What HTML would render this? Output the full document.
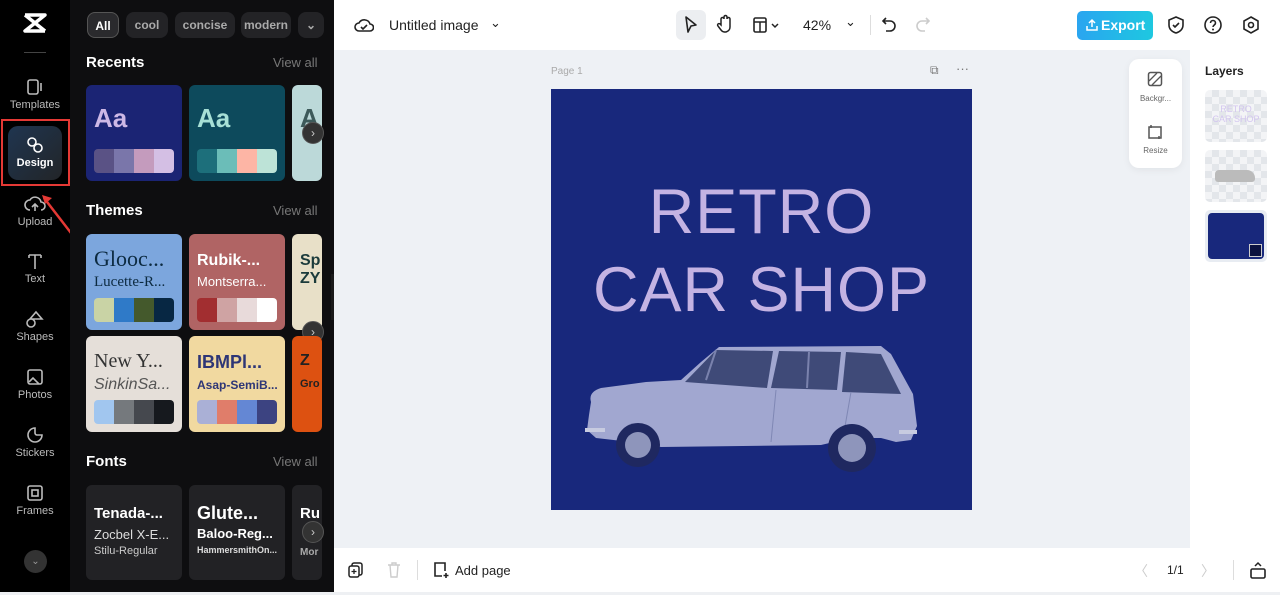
<!DOCTYPE html>
<html><head><meta charset="utf-8"><style>
*{box-sizing:border-box;margin:0;padding:0}
body{width:1280px;height:595px;overflow:hidden;font-family:"Liberation Sans",sans-serif;background:#fff;position:relative}
.abs{position:absolute}
.rail{left:0;top:0;width:70px;height:595px;background:#000}
.rail .it{position:absolute;left:0;width:70px;text-align:center;color:#bbb;font-size:11px}
.rail svg{display:block;margin:0 auto 3px}
.panel{left:70px;top:0;width:264px;height:595px;background:#0e0e10;overflow:hidden}
.chip{position:absolute;top:12px;height:26px;border-radius:8px;background:#232326;color:#aaa;font-size:12px;font-weight:bold;line-height:26px;text-align:center;overflow:hidden}
.h{position:absolute;left:16px;color:#fff;font-weight:bold;font-size:15px}
.va{position:absolute;left:203px;color:#777;font-size:13px}
.card{position:absolute;width:96px;height:96px;border-radius:6px;overflow:hidden}
.pal{position:absolute;left:8px;bottom:8px;width:80px;height:24px;border-radius:4px;overflow:hidden;display:flex}
.pal i{flex:1}
.next{position:absolute;left:232px;width:22px;height:22px;border-radius:50%;background:#333;border:1px solid #555;color:#ccc;font-size:12px;line-height:20px;text-align:center}
.ct{position:absolute;left:8px;font-weight:bold;white-space:nowrap}
.sf{font-family:"Liberation Serif",serif;font-weight:normal}
</style></head><body>
<div class="abs rail">
 <svg class="abs" style="left:22px;top:12px" width="26" height="22" viewBox="0 0 26 22"><path d="M3 3h20L3 19h20M3 3l20 16" stroke="#fff" stroke-width="3.5" fill="none" stroke-linejoin="round"/></svg>
 <div class="abs" style="left:24px;top:52px;width:22px;height:1px;background:#444"></div>
 <div class="it" style="top:78px"><svg width="20" height="18"><rect x="3" y="2" width="10" height="14" rx="2" fill="none" stroke="#bbb" stroke-width="1.6"/><path d="M16 5v8" stroke="#bbb" stroke-width="1.6"/></svg>Templates</div>
 <div class="abs" style="left:1px;top:119px;width:69px;height:67px;border:2px solid #e53935"></div>
 <div class="abs" style="left:8px;top:126px;width:54px;height:54px;border-radius:10px;background:linear-gradient(135deg,#1f3550,#222528)"></div>
 <div class="it" style="top:136px;color:#fff;font-weight:bold"><svg width="20" height="18"><circle cx="7" cy="6" r="4" fill="none" stroke="#fff" stroke-width="1.6"/><circle cx="13" cy="12" r="4" fill="none" stroke="#fff" stroke-width="1.6"/></svg>Design</div>
 <svg class="abs" style="left:38px;top:190px" width="36" height="46"><path d="M33 43L6 8" stroke="#e53935" stroke-width="2.5"/><path d="M4 5l10 3-7 6z" fill="#e53935"/></svg>
 <div class="it" style="top:195px"><svg width="22" height="18"><path d="M6 15a5 5 0 010-10 6 6 0 0111 2 4 4 0 010 8M11 16V9m-3 3l3-3 3 3" fill="none" stroke="#bbb" stroke-width="1.6"/></svg>Upload</div>
 <div class="it" style="top:252px"><svg width="20" height="18"><path d="M4 3h12M10 3v14M4 3v3M16 3v3" stroke="#bbb" stroke-width="1.6" fill="none"/></svg>Text</div>
 <div class="it" style="top:310px"><svg width="20" height="18"><path d="M11 2l6 7h-12z M6 9a4 4 0 100 8 4 4 0 000-8" fill="none" stroke="#bbb" stroke-width="1.6"/></svg>Shapes</div>
 <div class="it" style="top:368px"><svg width="20" height="18"><rect x="3" y="2" width="14" height="14" rx="2" fill="none" stroke="#bbb" stroke-width="1.6"/><path d="M4 14l4-4 6 6" stroke="#bbb" stroke-width="1.6" fill="none"/></svg>Photos</div>
 <div class="it" style="top:426px"><svg width="20" height="18"><path d="M10 2a7 7 0 107 7h-5a2 2 0 01-2-2z" fill="none" stroke="#bbb" stroke-width="1.6"/></svg>Stickers</div>
 <div class="it" style="top:484px"><svg width="20" height="18"><rect x="3" y="2" width="14" height="14" rx="2" fill="none" stroke="#bbb" stroke-width="1.6"/><rect x="7" y="6" width="6" height="6" fill="none" stroke="#bbb" stroke-width="1.6"/></svg>Frames</div>
 <div class="abs" style="left:24px;top:550px;width:23px;height:23px;border-radius:50%;background:#333;color:#999;font-size:10px;text-align:center;line-height:23px">⌄</div>
</div>
<div class="abs panel">
 <div class="chip" style="left:17px;width:32px;background:#2a2a2d;border:1px solid #555;color:#fff">All</div>
 <div class="chip" style="left:56px;width:42px">cool</div>
 <div class="chip" style="left:105px;width:60px">concise</div>
 <div class="chip" style="left:171px;width:50px">modern</div>
 <div class="chip" style="left:228px;width:26px">⌄</div>
 <div class="h" style="top:54px">Recents</div><div class="va" style="top:55px">View all</div>
 <div class="card" style="left:16px;top:85px;background:#1b2474"><div class="ct" style="top:18px;font-size:26px;color:#cdb8e6">Aa</div><div class="pal"><i style="background:#5a5285"></i><i style="background:#7a76aa"></i><i style="background:#c49bbd"></i><i style="background:#d4bfe4"></i></div></div>
 <div class="card" style="left:119px;top:85px;background:#0d4a5c"><div class="ct" style="top:18px;font-size:26px;color:#a7e0d6">Aa</div><div class="pal"><i style="background:#1d6f7b"></i><i style="background:#6bbdb8"></i><i style="background:#fdb5a5"></i><i style="background:#bde3d7"></i></div></div>
 <div class="card" style="left:222px;top:85px;width:30px;background:#bcd9d9"><div class="ct" style="top:18px;font-size:26px;color:#3d5a5a">A</div></div>
 <div class="next" style="top:122px">›</div>
 <div class="h" style="top:202px">Themes</div><div class="va" style="top:203px">View all</div>
 <div class="card" style="left:16px;top:234px;background:#7ca6dd"><div class="ct sf" style="top:12px;font-size:22px;color:#0c2a40">Glooc...</div><div class="ct sf" style="top:40px;font-size:15px;color:#0c2a40">Lucette-R...</div><div class="pal"><i style="background:#c9d3a5"></i><i style="background:#2f7ac8"></i><i style="background:#44592c"></i><i style="background:#072743"></i></div></div>
 <div class="card" style="left:119px;top:234px;background:#b06464"><div class="ct" style="top:18px;font-size:16px;color:#fff">Rubik-...</div><div class="ct" style="top:40px;font-size:13px;color:#fff;font-weight:normal">Montserra...</div><div class="pal"><i style="background:#a22e30"></i><i style="background:#cfa3a3"></i><i style="background:#e8dada"></i><i style="background:#fff"></i></div></div>
 <div class="card" style="left:222px;top:234px;width:30px;background:#e8e0c8"><div class="ct" style="top:18px;font-size:16px;color:#1b3b3b">Sp<br>ZY</div></div>
 <div class="next" style="top:321px">›</div>
 <div class="card" style="left:16px;top:336px;background:#e5dfd9"><div class="ct sf" style="top:14px;font-size:20px;color:#333">New Y...</div><div class="ct" style="top:40px;font-size:16px;color:#555;font-style:italic;font-weight:normal">SinkinSa...</div><div class="pal"><i style="background:#a1c6ef"></i><i style="background:#75797d"></i><i style="background:#45484e"></i><i style="background:#16191e"></i></div></div>
 <div class="card" style="left:119px;top:336px;background:#f1d9a0"><div class="ct" style="top:16px;font-size:18px;color:#2e3676">IBMPl...</div><div class="ct" style="top:42px;font-size:12px;color:#2e3676">Asap-SemiB...</div><div class="pal"><i style="background:#aab0d6"></i><i style="background:#e07d6a"></i><i style="background:#6487d4"></i><i style="background:#3c4381"></i></div></div>
 <div class="card" style="left:222px;top:336px;width:30px;background:#dd5111"><div class="ct" style="top:16px;font-size:16px;color:#222">Z</div><div class="ct" style="top:42px;font-size:11px;color:#222">Gro</div></div>
 <div class="h" style="top:453px">Fonts</div><div class="va" style="top:454px">View all</div>
 <div class="card" style="left:16px;top:485px;background:#222225;height:95px"><div class="ct" style="top:20px;font-size:15px;color:#fff">Tenada-...</div><div class="ct" style="top:42px;font-size:13px;color:#ddd;font-weight:normal">Zocbel X-E...</div><div class="ct" style="top:60px;font-size:11px;color:#ccc;font-weight:normal">Stilu-Regular</div></div>
 <div class="card" style="left:119px;top:485px;background:#222225;height:95px"><div class="ct" style="top:18px;font-size:18px;color:#fff">Glute...</div><div class="ct" style="top:41px;font-size:13px;color:#fff">Baloo-Reg...</div><div class="ct" style="top:60px;font-size:9px;color:#ddd">HammersmithOn...</div></div>
 <div class="card" style="left:222px;top:485px;width:30px;background:#222225;height:95px"><div class="ct" style="top:20px;font-size:15px;color:#fff">Ru</div><div class="ct" style="top:62px;font-size:10px;color:#aaa">Mor</div></div>
 <div class="next" style="top:521px">›</div>
</div>
<div class="abs" style="left:331px;top:274px;width:9px;height:46px;background:#1a1a1a;border-radius:0 5px 5px 0"></div>
<!-- top bar -->
<div class="abs" style="left:334px;top:0;width:946px;height:50px;background:#fff"></div>
<svg class="abs" style="left:354px;top:16px" width="20" height="18"><path d="M5 15a4 4 0 010-8 6 6 0 0111 1 3.5 3.5 0 010 7z" fill="none" stroke="#222" stroke-width="1.6"/><path d="M7 11l2 2 4-4" fill="none" stroke="#222" stroke-width="1.6"/></svg>
<div class="abs" style="left:389px;top:17px;font-size:14px;color:#222">Untitled image</div>
<div class="abs" style="left:490px;top:15px;font-size:13px;color:#222">⌄</div>
<div class="abs" style="left:676px;top:10px;width:30px;height:30px;border-radius:6px;background:#eceef1"></div>
<svg class="abs" style="left:683px;top:15px" width="16" height="20"><path d="M3 2l10 8-5 1-3 6z" fill="none" stroke="#222" stroke-width="1.6" stroke-linejoin="round"/></svg>
<svg class="abs" style="left:716px;top:14px" width="18" height="20"><path d="M5 11V5a1.5 1.5 0 013 0V3a1.5 1.5 0 013 0v2a1.5 1.5 0 013 0v8a5 5 0 01-9 3l-3-4a1.3 1.3 0 012-2z" fill="none" stroke="#222" stroke-width="1.5"/></svg>
<svg class="abs" style="left:752px;top:16px" width="30" height="18"><rect x="2" y="2" width="12" height="14" rx="1.5" fill="none" stroke="#222" stroke-width="1.6"/><path d="M2 6h12M8 6v10M20 8l3 3 3-3" fill="none" stroke="#222" stroke-width="1.5"/></svg>
<div class="abs" style="left:803px;top:17px;font-size:14px;color:#222">42%</div>
<div class="abs" style="left:845px;top:14px;font-size:13px;color:#222">⌄</div>
<div class="abs" style="left:870px;top:15px;width:1px;height:20px;background:#ddd"></div>
<svg class="abs" style="left:880px;top:15px" width="20" height="20"><path d="M6 3L3 6l3 3M3 6h7a5 5 0 010 10H6" fill="none" stroke="#222" stroke-width="1.6"/></svg>
<svg class="abs" style="left:914px;top:15px" width="20" height="20"><path d="M12 3l3 3-3 3M15 6H8a5 5 0 000 10h3" fill="none" stroke="#ccc" stroke-width="1.6"/></svg>
<div class="abs" style="left:1077px;top:11px;width:76px;height:29px;border-radius:5px;background:linear-gradient(90deg,#2aa5f0,#1ec8e0);color:#fff;font-weight:bold;font-size:14px;line-height:29px;padding-left:24px">Export</div>
<svg class="abs" style="left:1085px;top:18px" width="14" height="14"><path d="M7 2v7M4 5l3-3 3 3M2 8v4h10V8" fill="none" stroke="#fff" stroke-width="1.5"/></svg>
<svg class="abs" style="left:1166px;top:15px" width="20" height="20"><path d="M10 2l7 3v5c0 4-3 7-7 8-4-1-7-4-7-8V5z M7 10l2 2 4-4" fill="none" stroke="#222" stroke-width="1.6"/></svg>
<svg class="abs" style="left:1203px;top:15px" width="20" height="20"><circle cx="10" cy="10" r="8" fill="none" stroke="#222" stroke-width="1.6"/><path d="M7.5 8a2.5 2.5 0 115 0c0 2-2.5 2-2.5 4" fill="none" stroke="#222" stroke-width="1.6"/><circle cx="10" cy="14.5" r="1" fill="#222"/></svg>
<svg class="abs" style="left:1241px;top:15px" width="20" height="20"><path d="M10 2l7 4v8l-7 4-7-4V6z" fill="none" stroke="#222" stroke-width="1.6"/><circle cx="10" cy="10" r="2.5" fill="none" stroke="#222" stroke-width="1.6"/></svg>
<!-- canvas area -->
<div class="abs" style="left:334px;top:50px;width:856px;height:498px;background:#eef1f5"></div>
<div class="abs" style="left:551px;top:66px;font-size:10px;color:#aaa">Page 1</div>
<div class="abs" style="left:930px;top:63px;font-size:12px;color:#777">⧉</div>
<div class="abs" style="left:956px;top:61px;font-size:13px;color:#777">···</div>
<div class="abs" style="left:551px;top:89px;width:421px;height:421px;background:#18287c;overflow:hidden">
 <div class="abs" style="left:0;width:421px;top:84px;text-align:center;color:#c4b3e3;font-size:63px;line-height:78px;letter-spacing:1px">RETRO<br>CAR SHOP</div>
 <svg class="abs" style="left:0;top:241px" width="421" height="180" viewBox="0 0 421 180">
  <path d="M40 72 Q37 62 50 58 L95 52 L130 50 L150 32 L168 17 L330 16 L340 24 L362 64 L366 96 L360 110 L345 112 L330 108 L300 108 L270 115 L110 117 L80 112 L45 108 L36 100 L38 85 Z" fill="#a1a7d0"/>
  <path d="M134 52 L165 20 L222 21 L216 58 Z" fill="#3f4a78"/>
  <path d="M228 21 L290 22 L286 60 L220 58 Z" fill="#3f4a78"/>
  <path d="M295 22 L330 24 L350 64 L291 62 Z" fill="#3f4a78"/>
  <path d="M165 20 L155 50 M258 22 L256 58" stroke="#7a82ad" stroke-width="2"/>
  <path d="M225 60 L220 112 M300 62 L292 108" stroke="#7f87b4" stroke-width="1"/>
  <circle cx="87" cy="115" r="22" fill="#1f2860"/><circle cx="87" cy="115" r="13" fill="#8e95bb"/>
  <circle cx="301" cy="118" r="24" fill="#1f2860"/><circle cx="301" cy="118" r="14" fill="#8e95bb"/>
  <path d="M34 100h20M348 102h18" stroke="#c7cbe0" stroke-width="4"/>
 </svg>
</div>
<div class="abs" style="left:1129px;top:59px;width:53px;height:109px;border-radius:10px;background:#fff;box-shadow:0 2px 8px rgba(0,0,0,.06)"></div>
<svg class="abs" style="left:1147px;top:71px" width="16" height="16"><rect x="1.5" y="1.5" width="13" height="13" rx="2" fill="none" stroke="#555" stroke-width="1.5"/><path d="M2 10l8-8M5 14l9-9" stroke="#555" stroke-width="1.3"/></svg>
<div class="abs" style="left:1129px;top:94px;width:53px;text-align:center;font-size:8px;color:#666">Backgr...</div>
<svg class="abs" style="left:1147px;top:124px" width="16" height="16"><rect x="2" y="3" width="12" height="11" fill="none" stroke="#555" stroke-width="1.5"/><path d="M4 1v3M12 12v3" stroke="#555" stroke-width="1.5"/></svg>
<div class="abs" style="left:1129px;top:146px;width:53px;text-align:center;font-size:8px;color:#666">Resize</div>
<!-- layers -->
<div class="abs" style="left:1190px;top:50px;width:90px;height:498px;background:#fff"></div>
<div class="abs" style="left:1205px;top:64px;font-size:12px;font-weight:bold;color:#222">Layers</div>
<div class="abs" style="left:1205px;top:90px;width:62px;height:52px;border-radius:5px;background:repeating-conic-gradient(#e3e6ea 0 25%,#f3f4f6 0 50%) 0 0/14px 14px;color:#d3c6ef;font-size:9px;text-align:center;padding-top:14px;line-height:10px">RETRO<br>CAR SHOP</div>
<div class="abs" style="left:1205px;top:150px;width:62px;height:52px;border-radius:5px;background:repeating-conic-gradient(#e3e6ea 0 25%,#f3f4f6 0 50%) 0 0/14px 14px"></div>
<div class="abs" style="left:1215px;top:170px;width:40px;height:12px;border-radius:4px 8px 3px 3px;background:#bbb"></div>
<div class="abs" style="left:1205px;top:210px;width:62px;height:52px;border-radius:5px;background:#e8ecf2;padding:3px"><div style="width:56px;height:46px;border-radius:4px;background:#18287c;position:relative"><div style="position:absolute;right:2px;bottom:2px;width:13px;height:13px;background:#0b1240;border:1px solid #ccc"></div></div></div>
<!-- bottom bar -->
<div class="abs" style="left:334px;top:548px;width:946px;height:44px;background:#fff"></div>
<div class="abs" style="left:0;top:592px;width:1280px;height:3px;background:#eef0f3"></div>
<svg class="abs" style="left:347px;top:561px" width="18" height="18"><rect x="5" y="2" width="10" height="12" rx="2" fill="none" stroke="#222" stroke-width="1.5"/><rect x="2" y="5" width="10" height="11" rx="2" fill="#fff" stroke="#222" stroke-width="1.5"/><path d="M7 8v5M4.5 10.5h5" stroke="#222" stroke-width="1.3"/></svg>
<svg class="abs" style="left:386px;top:561px" width="16" height="18"><path d="M2 4h12M6 4V2h4v2M4 4l1 12h6l1-12" fill="none" stroke="#ccc" stroke-width="1.4"/></svg>
<div class="abs" style="left:417px;top:560px;width:1px;height:20px;background:#ddd"></div>
<svg class="abs" style="left:432px;top:561px" width="18" height="18"><path d="M10 15H3V2h10v8" fill="none" stroke="#222" stroke-width="1.6"/><path d="M14 12v5M11.5 14.5h5" stroke="#222" stroke-width="1.6"/></svg>
<div class="abs" style="left:455px;top:563px;font-size:13px;color:#222">Add page</div>
<div class="abs" style="left:1134px;top:561px;font-size:14px;color:#ccc">〈</div>
<div class="abs" style="left:1167px;top:563px;font-size:12px;color:#222">1/1</div>
<div class="abs" style="left:1201px;top:561px;font-size:14px;color:#ccc">〉</div>
<div class="abs" style="left:1233px;top:560px;width:1px;height:20px;background:#ddd"></div>
<svg class="abs" style="left:1249px;top:560px" width="18" height="20"><rect x="2" y="9" width="14" height="9" rx="1.5" fill="none" stroke="#222" stroke-width="1.6"/><path d="M6 6l3-3 3 3" fill="none" stroke="#222" stroke-width="1.5"/></svg>
</body></html>
